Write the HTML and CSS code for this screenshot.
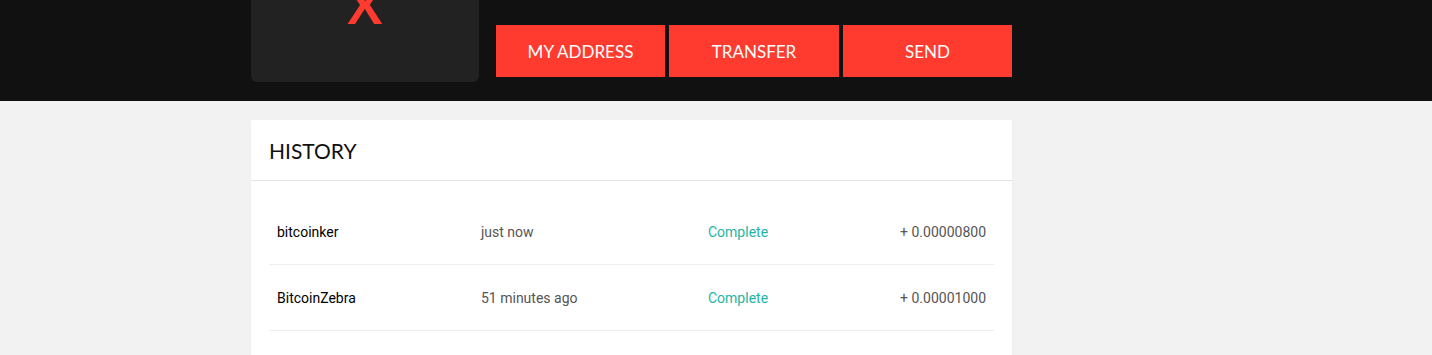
FILE: index.html
```html
<!DOCTYPE html>
<html lang="en">
<head>
    <meta charset="UTF-8">
    <title>Wallet</title>
    <link rel="stylesheet" href="styles.css">
</head>
<body>

    <header class="top-bar">
        <div class="top-inner">
            <div class="logo-card">
                <span class="logo-mark">X</span>
            </div>
            <nav class="actions">
                <button class="action-button">MY ADDRESS</button>
                <button class="action-button">TRANSFER</button>
                <button class="action-button">SEND</button>
            </nav>
        </div>
    </header>

    <!-- History -->
    <main class="content">
        <section class="history-card">
            <h2 class="history-title">HISTORY</h2>
            <div class="history-body">
                <div class="history-row">
                    <span class="col-user">bitcoinker</span>
                    <span class="col-time">just now</span>
                    <span class="col-status">Complete</span>
                    <span class="col-amount">+ 0.00000800</span>
                </div>
                <div class="history-row">
                    <span class="col-user">BitcoinZebra</span>
                    <span class="col-time">51 minutes ago</span>
                    <span class="col-status">Complete</span>
                    <span class="col-amount">+ 0.00001000</span>
                </div>
            </div>
        </section>
    </main>

</body>
</html>
```

FILE: styles.css
```css
body {
    margin: 0;
    padding: 0;
    background-color: #f2f2f2;
    font-family: Roboto, "Liberation Sans", sans-serif;
    height: 355px;
    overflow: hidden;
}
.top-bar {
    background-color: #111111;
    height: 101px;
    box-sizing: border-box;
    padding-bottom: 19px;
}
.top-inner {
    display: flex;
    align-items: flex-end;
    height: 100%;
    margin-left: 251px;
    width: 761px;
}
.logo-card {
    width: 228px;
    height: 82px;
    background-color: #222222;
    border-radius: 0 0 6px 6px;
    overflow: hidden;
    display: flex;
    justify-content: center;
}
.logo-mark {
    font-family: Lato, "Liberation Sans", sans-serif;
    font-weight: 700;
    font-size: 52px;
    line-height: 52px;
    color: #ff3b30;
    margin-top: -22px;
}
.actions {
    display: flex;
    gap: 4px;
    margin-left: 17px;
    margin-bottom: 5px;
}
.action-button {
    width: 169px;
    height: 52px;
    border: none;
    background-color: #ff3b30;
    color: white;
    font-family: Lato, "Liberation Sans", sans-serif;
    font-size: 17px;
    cursor: pointer;
    padding: 0;
}
.action-button:nth-child(2) {
    width: 170px;
}
.content {
    margin-left: 251px;
    width: 761px;
    padding-top: 19px;
}
.history-card {
    background-color: white;
    padding-bottom: 60px;
    box-shadow: 0 1px 2px rgba(0, 0, 0, 0.04);
}
.history-title {
    margin: 0;
    height: 60px;
    line-height: 62px;
    padding: 0 18px;
    font-family: Lato, "Liberation Sans", sans-serif;
    font-weight: 400;
    font-size: 21px;
    color: #111111;
    border-bottom: 1px solid #e2e2e2;
}
.history-body {
    padding: 18px 18px 0 18px;
}
.history-row {
    display: grid;
    grid-template-columns: 204px 227px 1fr 1fr;
    align-items: center;
    height: 65px;
    border-bottom: 1px solid #eeeeee;
    font-size: 14px;
}
.history-row span {
    padding: 0 8px;
}
.col-user {
    color: #000000;
}
.col-time {
    color: #555555;
}
.col-status {
    color: #1fb5a5;
}
.col-amount {
    color: #555555;
    text-align: right;
}
```
